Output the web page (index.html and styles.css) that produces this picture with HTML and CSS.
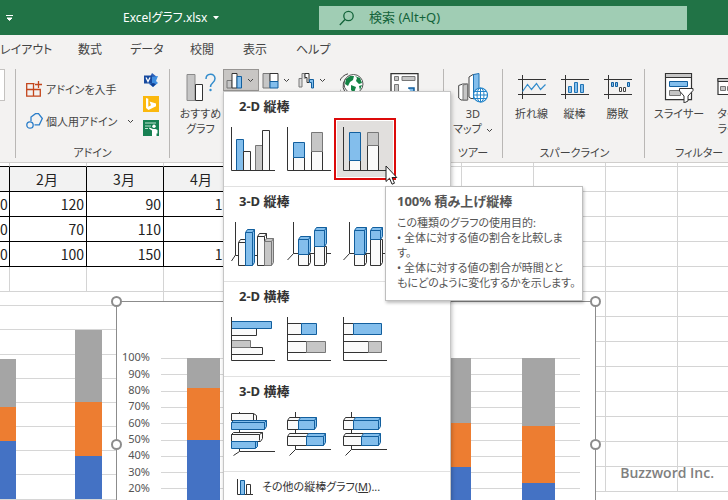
FILE: index.html
```html
<!DOCTYPE html>
<html lang="ja">
<head>
<meta charset="utf-8">
<title>Excelグラフ.xlsx</title>
<link rel="stylesheet" href="styles.css">
</head>
<body>
<header class="titlebar">
  <button class="qat" aria-label="クイック アクセス"><svg width="8" height="8" viewBox="0 0 8 8"><path d="M0 1.500h7M1 4l2.500 2.500L6 4z" fill="#fff" stroke="#fff"/></svg></button>
  <button class="doc">Excelグラフ.xlsx <svg width="6" height="4" viewBox="0 0 6 4"><path d="M0 0h6L3 3.500z" fill="#fff"/></svg></button>
  <label class="search">
    <svg width="16" height="16" viewBox="0 0 16 16" fill="none" stroke="#13633a" stroke-width="1.300"><circle cx="9.500" cy="6" r="4.700"/><path d="M6 9.500L.8 15"/></svg>
    <input type="text" placeholder="検索 (Alt+Q)" aria-label="検索">
  </label>
</header>

<nav class="tabs">
  <a href="#">レイアウト</a><a href="#">数式</a><a href="#">データ</a><a href="#">校閲</a><a href="#">表示</a><a href="#">ヘルプ</a>
</nav>

<section class="ribbon">
  <div class="group g-edge"><div class="gallery"></div></div>

  <div class="group g-addin">
    <div class="tools">
      <div class="rows">
        <button class="row"><svg width="17" height="16" viewBox="0 0 17 16" fill="none" stroke="#c4461c" stroke-width="1.300"><path d="M8.500 2.600H.7v12.600h13.600V8.500H.7M7.500 2.600v12.600M12.500 0v7M9 3.500h7"/></svg>アドインを入手</button>
        <button class="row"><svg width="17" height="16" viewBox="0 0 17 16" fill="none" stroke="#2a7dc9" stroke-width="1.300"><path d="M5 8V4l4.500-3.300h3L16.300 5.500l-3 6.300H8.500"/><circle cx="4" cy="12" r="3.200"/></svg>個人用アドイン<svg class="chev wide" width="7" height="5" viewBox="0 0 7 5"><path d="M1 1l2.500 2.500L6 1"/></svg></button>
      </div>
      <div class="apps">
        <button aria-label="Visio"><svg width="16" height="16" viewBox="0 0 16 16"><path d="M9 1l5 4-2 3-5-3z" fill="#2b5fb8"/><path d="M9 5l6-1-2 5 2 2-5 4-4-3z" fill="#3f8ee0"/><path d="M10 11l3 1-3 3-3-3z" fill="#123f91"/><rect x="1" y="3.500" width="8" height="8" fill="#174a9f"/><path d="M3 5.500l2 4 2-4" fill="none" stroke="#fff" stroke-width="1.300"/></svg></button>
        <button aria-label="Bing"><svg width="16" height="16" viewBox="0 0 16 16"><path d="M0 0h16v16H0z" fill="#fbb80d"/><path d="M3 2l2.300.8v8L8 9.300l-1.500-3.800 6.500 2v2.700L5.500 14 3 12z" fill="#fff"/></svg></button>
        <button aria-label="People Graph"><svg width="16" height="16" viewBox="0 0 16 16"><path d="M0 0h16v16H0z" fill="#178052"/><path d="M2 3h11M2 6h6M2 8.500h3" stroke="#bfe3d0" stroke-width="1"/><circle cx="11" cy="6.300" r="1.700" fill="#fff"/><path d="M6.500 7.500L10 9h2.500l2 1v3.500h-1V16H9v-5.500L6 8.500z" fill="#fff"/></svg></button>
      </div>
    </div>
    <div class="caption">アドイン</div>
  </div>

  <div class="group g-charts">
    <div class="tools">
      <button class="big b-rec"><svg width="30" height="30" viewBox="0 0 30 30"><path d="M1 1.500h8v26H1z" fill="#c6c6c6" stroke="#8a8a8a"/><path d="M9.500 11.500h7v16h-7z" fill="#fff" stroke="#333"/><path d="M20 6c0-6 9-6.500 9-.5 0 4.500-4.500 4-4.500 8.500" fill="none" stroke="#328ccc" stroke-width="1.500"/><circle cx="24.500" cy="17" r="1.200" fill="#328ccc"/></svg>おすすめ<br>グラフ</button>
      <div class="splits">
        <button class="split on" aria-label="縦棒グラフ"><svg width="17" height="17" viewBox="0 0 17 17"><path d="M1 8.500h5v7.500H1z" fill="#c6c6c6" stroke="#777"/><path d="M6 1.500h5V16H6z" fill="#fff" stroke="#333"/><path d="M11 4.500h4.500V16H11z" fill="#83beec" stroke="#125f9e"/></svg><svg class="chev" width="7" height="5" viewBox="0 0 7 5"><path d="M1 1l2.500 2.500L6 1"/></svg></button>
        <button class="split" aria-label="階層構造グラフ"><svg width="17" height="17" viewBox="0 0 17 17"><path d="M1 1.500h7V16H1z" fill="#c6c6c6" stroke="#777"/><path d="M8 1.500h8v8H8z" fill="#fff" stroke="#333"/><path d="M8 9.500h8V16H8z" fill="#83beec" stroke="#125f9e"/></svg><svg class="chev" width="7" height="5" viewBox="0 0 7 5"><path d="M1 1l2.500 2.500L6 1"/></svg></button>
        <button class="split" aria-label="ウォーターフォール図"><svg width="17" height="17" viewBox="0 0 17 17"><path d="M1 15V6.500h3V15zM4 6.500v-5h3V7" fill="#ddd" stroke="#777"/><path d="M7 1.500h4v9H9v-5H7z" fill="#fff" stroke="#333"/><path d="M11.500 10.500v-3h4V16h-2v-5.500z" fill="#83beec" stroke="#125f9e"/></svg><svg class="chev" width="7" height="5" viewBox="0 0 7 5"><path d="M1 1l2.500 2.500L6 1"/></svg></button>
      </div>
      <button class="big b-map" aria-label="マップ"><svg width="24" height="28" viewBox="0 0 24 28"><path d="M8 .8A12 12 0 0 0 1.500 20M9 3A11 11 0 0 0 5 19" fill="none" stroke="#444"/><circle cx="13.500" cy="11" r="9.500" fill="#fff" stroke="#555"/><path d="M6 6l4-3 4 0-1 4-3 2-2 4-3-2zM15 3l5 2 2 5-3 1-3-3 1-3zM11 12l5 2-2 6-3-3zM19 13l3-1-2 5z" fill="#148345"/></svg></button>
      <button class="big b-pivot" aria-label="ピボットグラフ"><svg width="30" height="28" viewBox="0 0 30 28"><path d="M1 .7h27V27H1z" fill="#fff" stroke="#333" stroke-width="1.300"/><path d="M4.500 3.500h4v4h-4zM12 3.500h13v4H12zM4.500 11.500h4v12h-4z" fill="#c6c6c6" stroke="#777"/><path d="M19 16v-1h5v9" fill="#83beec" stroke="#125f9e" stroke-width="1.500"/></svg></button>
    </div>
    <div class="caption">グラフ</div>
  </div>

  <div class="group g-tour">
    <div class="tools">
      <button class="big"><svg width="30" height="30" viewBox="0 0 30 30"><path d="M.7 12.500l4-1.500h5v16H3L.7 25z" fill="#fff" stroke="#444"/><path d="M5 12l4.500-1v16H5z" fill="#c6c6c6" stroke="#777"/><path d="M11 4l4-2.500h5.500v24H13L11 24z" fill="#fff" stroke="#444"/><path d="M15.500 1.500l5.500-1V24l-5.500 2z" fill="#83beec" stroke="#2174b5"/><circle cx="22.500" cy="22" r="7" fill="#fff" stroke="#2384c9" stroke-width="1.200"/><path d="M15.500 22h14M17 18.500h11M17 25.500h11M22.500 15v14" stroke="#2384c9" fill="none"/><ellipse cx="22.500" cy="22" rx="3.500" ry="7" fill="none" stroke="#2384c9"/></svg>3D<br>マップ<svg class="chev" width="7" height="5" viewBox="0 0 7 5"><path d="M1 1l2.500 2.500L6 1"/></svg></button>
    </div>
    <div class="caption">ツアー</div>
  </div>

  <div class="group g-spark">
    <div class="tools">
      <button class="big"><svg width="30" height="30" viewBox="0 0 30 30" fill="none"><path d="M1 6.500h28M1 21.500h28M5.500 2v24" stroke="#333"/><path d="M5.500 18.500l5-7 4 5 5-6 4 6 5-5" stroke="#328ccc" stroke-width="1.200"/></svg>折れ線</button>
      <button class="big"><svg width="30" height="30" viewBox="0 0 30 30"><path d="M1 6.500h28M1 21.500h28M5.500 2v24" stroke="#333"/><path d="M8.500 13.500h3v6h-3zM14.500 9.500h3v10h-3zM20.500 11.500h3v8h-3z" fill="#83beec" stroke="#2174b5"/></svg>縦棒</button>
      <button class="big"><svg width="30" height="30" viewBox="0 0 30 30"><path d="M1 6.500h28M1 21.500h28M5.500 2v24" stroke="#333"/><path d="M8.500 9.500h2v4h-2zM12.500 9.500h2v4h-2zM24.500 9.500h2v4h-2z" fill="#83beec" stroke="#125f9e"/><path d="M16.500 14.500h2v4h-2zM20.500 14.500h2v4h-2z" fill="#fff" stroke="#444"/></svg>勝敗</button>
    </div>
    <div class="caption">スパークライン</div>
  </div>

  <div class="group g-filter">
    <div class="tools">
      <button class="big b-slicer"><svg width="30" height="30" viewBox="0 0 30 30"><path d="M1.500.7h26v26h-26z" fill="#fff" stroke="#333" stroke-width="1.200"/><path d="M2 1h25v3.500H2z" fill="#c6c6c6"/><path d="M1.500 4.500h26" stroke="#333"/><path d="M5.500 8.500h18v5h-18z" fill="#83beec" stroke="#125f9e"/><path d="M5.500 17.500h11v5h-11z" fill="#c6c6c6" stroke="#777"/><path d="M15.500 15.500h13.500v2l-5 5.500v5l-4 2v-7l-4.500-5z" fill="#fff" stroke="#333"/></svg>スライサー</button>
      <button class="big b-time"><svg width="30" height="30" viewBox="0 0 30 30"><path d="M1 5.500h28v16H1z" fill="#fff" stroke="#333" stroke-width="1.200"/><path d="M1 5.500h28v3H1z" fill="#c6c6c6" stroke="#333"/><path d="M3.500 13.500h5v4h-5zM10.500 13.500h5v4h-5z" fill="#c6c6c6" stroke="#777"/><path d="M15 15.500h13l-5 6v6l-3 1v-7z" fill="#fff" stroke="#333"/></svg>タイム<br>ライン</button>
    </div>
    <div class="caption">フィルター</div>
  </div>
</section>

<main class="sheet">
  <table>
    <colgroup><col class="c0"><col class="cm"><col class="cm"><col class="cm"><col class="cm"><col class="cn"><col class="cn"><col class="cn"><col class="cn"><col class="cn"><col class="cn"></colgroup>
    <tbody>
    <tr class="stub"><td></td><td></td><td></td><td></td><td></td><td></td><td></td><td></td><td></td><td></td><td></td></tr>
    <tr class="head"><th></th><th>2月</th><th>3月</th><th>4月</th><td></td><td></td><td></td><td></td><td></td><td></td><td></td></tr>
    <tr><td class="n">0</td><td class="n">120</td><td class="n">90</td><td class="n">110</td><td></td><td></td><td></td><td></td><td></td><td></td><td></td></tr>
    <tr><td class="n">0</td><td class="n">70</td><td class="n">110</td><td class="n"></td><td></td><td></td><td></td><td></td><td></td><td></td><td></td></tr>
    <tr><td class="n">0</td><td class="n">100</td><td class="n">150</td><td class="n">110</td><td></td><td></td><td></td><td></td><td></td><td></td><td></td></tr>
    <tr><td></td><td></td><td></td><td></td><td></td><td></td><td></td><td></td><td></td><td></td><td></td></tr>
    <tr><td></td><td></td><td></td><td></td><td></td><td></td><td></td><td></td><td></td><td></td><td></td></tr>
    <tr><td></td><td></td><td></td><td></td><td></td><td></td><td></td><td></td><td></td><td></td><td></td></tr>
    <tr><td></td><td></td><td></td><td></td><td></td><td></td><td></td><td></td><td></td><td></td><td></td></tr>
    <tr><td></td><td></td><td></td><td></td><td></td><td></td><td></td><td></td><td></td><td></td><td></td></tr>
    <tr><td></td><td></td><td></td><td></td><td></td><td></td><td></td><td></td><td></td><td></td><td></td></tr>
    <tr><td></td><td></td><td></td><td></td><td></td><td></td><td></td><td></td><td></td><td></td><td></td></tr>
    <tr><td></td><td></td><td></td><td></td><td></td><td></td><td></td><td></td><td></td><td></td><td></td></tr>
    <tr><td></td><td></td><td></td><td></td><td></td><td></td><td></td><td></td><td></td><td></td><td></td></tr>
    </tbody>
  </table>

  <svg class="chart chart-a" width="116" height="208" viewBox="0 0 116 208" shape-rendering="crispEdges">
    <path d="M0 0h116v208H0z" fill="#fff"/>
    <path d="M0 13.500h116M0 37.500h116M0 62.500h116M0 86.500h116M0 110.500h116M0 134.500h116M0 158.500h116M0 182.500h116M0 207.500h116" stroke="#d6d6d6"/>
    <path d="M0 67h16v48H0zM75 38h27v72H75z" fill="#a5a5a5"/>
    <path d="M0 115h16v34H0zM75 110h27v54H75z" fill="#ed7d31"/>
    <path d="M0 149h16v58H0zM75 164h27v43H75z" fill="#4472c4"/>
  </svg>

  <svg class="chart chart-b" width="492" height="240" viewBox="0 0 492 240">
    <path d="M6.500 6.500h479V260H6.500z" fill="#fff" stroke="#8c8c8c"/>
    <path d="M51 63.500h419M51 79.500h419M51 96.500h419M51 112.500h419M51 128.500h419M51 145.500h419M51 161.500h419M51 177.500h419M51 193.500h419" stroke="#d6d6d6"/>
    <g shape-rendering="crispEdges">
      <path d="M77 63h33v30H77zM328 63h33v65h-33zM412 63h33v68h-33z" fill="#a5a5a5"/>
      <path d="M77 93h33v52H77zM328 128h33v44h-33zM412 131h33v57h-33z" fill="#ed7d31"/>
      <path d="M77 145h33v95H77zM328 172h33v68h-33zM412 188h33v52h-33z" fill="#4472c4"/>
    </g>
    <g class="axis">
      <text x="40" y="66">100%</text><text x="40" y="83">90%</text><text x="40" y="99">80%</text><text x="40" y="115">70%</text><text x="40" y="132">60%</text><text x="40" y="148">50%</text><text x="40" y="164">40%</text><text x="40" y="181">30%</text><text x="40" y="197">20%</text>
    </g>
    <g fill="#fff" stroke="#8c8c8c" stroke-width="2"><circle cx="6.500" cy="6.500" r="4.500"/><circle cx="485.500" cy="6.500" r="4.500"/><circle cx="6.500" cy="149.500" r="4.500"/><circle cx="485.500" cy="149.500" r="4.500"/></g>
  </svg>
  <div class="mark">Buzzword Inc.</div>
</main>

<div class="menu">
  <section>
    <h2>2-D 縦棒</h2>
    <div class="items">
      <button aria-label="集合縦棒"><svg class="ic" viewBox="0 0 44 44"><path class="b" d="M5.500 12.500h7v31h-7z"/><path class="w" d="M12.500 24.500h7v19h-7z"/><path class="g" d="M24.500 18.500h7v25h-7z"/><path class="w" d="M31.500 3.500h7v40h-7z"/><path class="ax" d="M.5 0v43.500H44"/></svg></button>
      <button aria-label="積み上げ縦棒"><svg class="ic" viewBox="0 0 44 44"><path class="w" d="M6.500 30.500h11v13h-11zM24.500 24.500h11v19h-11z"/><path class="b" d="M6.500 15.500h11v15h-11z"/><path class="g" d="M24.500 5.500h11v19h-11z"/><path class="ax" d="M.5 0v43.500H44"/></svg></button>
      <button class="picked" aria-label="100% 積み上げ縦棒"><svg class="ic" viewBox="0 0 44 44"><path class="w" d="M6.500 33.500h11v10h-11zM24.500 18.500h11v25h-11z"/><path class="b" d="M6.500 5.500h11v28h-11z"/><path class="g" d="M24.500 5.500h11v13h-11z"/><path class="ax" d="M.5 0v43.500H44"/></svg></button>
    </div>
  </section>
  <section>
    <h2>3-D 縦棒</h2>
    <div class="items">
      <button aria-label="3-D 集合縦棒"><svg class="ic" viewBox="0 0 44 44"><path class="ax" d="M4.500 0v33L.5 39M4.500 33.500h38"/><path class="w" d="M7.500 20.500l2-3h7v26h-9zM7.500 20.500h7v23"/><path class="b" d="M14.500 10.500l2-3h7v33l-2 3h-7zM14.500 10.500h7v33M21.500 10.500l2-3"/><path class="w" d="M26.500 14.500l2-3h7v32h-9zM26.500 14.500h7v29M33.500 14.500l2-3"/><path class="g" d="M33.500 19.500l2-3h7v24l-2 3h-7zM33.500 19.500h7v24M40.500 19.500l2-3"/></svg></button>
      <button aria-label="3-D 積み上げ縦棒"><svg class="ic" viewBox="0 0 44 44"><path class="ax" d="M6.500 0v31.500L.5 38M6.500 31.500H44"/><path class="w" d="M11.500 32.500h12v8l-2 3h-10zM21.500 32.500v11M27.500 24.500h12v16l-2 3h-10zM37.500 24.500v19"/><path class="b" d="M11.500 17.500l2-3h10v15l-2 3h-10zM11.500 17.500h10v15M21.500 17.500l2-3M27.500 8.500l2-3h10v16l-2 3h-10zM27.500 8.500h10v16M37.500 8.500l2-3"/></svg></button>
      <button aria-label="3-D 100% 積み上げ縦棒"><svg class="ic" viewBox="0 0 44 44"><path class="ax" d="M6.500 0v31.500L.5 38M6.500 31.500H44"/><path class="w" d="M11.500 32.500h12v8l-2 3h-10zM21.500 32.500v11M27.500 17.500h12v23l-2 3h-10zM37.500 17.500v26"/><path class="b" d="M11.500 8.500l2-3h10v24l-2 3h-10zM11.500 8.500h10v24M21.500 8.500l2-3M27.500 8.500l2-3h10v9l-2 3h-10zM27.500 8.500h10v9M37.500 8.500l2-3"/></svg></button>
    </div>
  </section>
  <section>
    <h2>2-D 横棒</h2>
    <div class="items">
      <button aria-label="集合横棒"><svg class="ic" viewBox="0 0 44 44"><path class="w" d="M.5 11.500h25v7H.5zM.5 30.500h31v7H.5z"/><path class="b" d="M.5 4.500h40v7H.5z"/><path class="g" d="M.5 23.500h19v7H.5z"/><path class="ax" d="M.5 0v43.500H44"/></svg></button>
      <button aria-label="積み上げ横棒"><svg class="ic" viewBox="0 0 44 44"><path class="w" d="M.5 6.500h14v11H.5zM.5 24.500h19v11H.5z"/><path class="b" d="M14.500 6.500h15v11h-15z"/><path class="g" d="M19.500 24.500h19v11h-19z"/><path class="ax" d="M.5 0v43.500H44"/></svg></button>
      <button aria-label="100% 積み上げ横棒"><svg class="ic" viewBox="0 0 44 44"><path class="w" d="M.5 6.500h10v11H.5zM.5 24.500h25v11H.5z"/><path class="b" d="M10.500 6.500h28v11h-28z"/><path class="g" d="M25.500 24.500h13v11h-13z"/><path class="ax" d="M.5 0v43.500H44"/></svg></button>
    </div>
  </section>
  <section>
    <h2>3-D 横棒</h2>
    <div class="items">
      <button aria-label="3-D 集合横棒"><svg class="ic" viewBox="0 0 44 44"><path class="ax" d="M8.500 0v39.500H44M8.500 39.500l-6 4"/><path class="w" d="M.5 1.500h22l3 2v5H.5zM22.500 1.500v7M.5 22.500l2-2h29v6l-2 3H.5zM.5 22.500h28v6M28.500 22.500l3-2"/><path class="b" d="M.5 10.500l2-2h33v6l-2 3H.5zM.5 10.500h33v7M33.500 10.500l2-2M.5 29.500h26v5l-2 2H.5zM24.500 30v6"/></svg></button>
      <button aria-label="3-D 積み上げ横棒"><svg class="ic" viewBox="0 0 44 44"><path class="ax" d="M8.500 0v37.500H44M8.500 37.500l-6 6"/><path class="w" d="M.5 8.500l2-3h11v12H.5zM.5 8.500h11M.5 24.500l2-3h19v12H.5zM.5 24.500h19"/><path class="b" d="M11.500 8.500l2-3h16v9l-2 3h-16zM11.500 8.500h16v9M27.500 8.500l2-3M19.500 24.500l2-3h17v9l-2 3h-17zM19.500 24.500h17v9M36.500 24.500l2-3"/></svg></button>
      <button aria-label="3-D 100% 積み上げ横棒"><svg class="ic" viewBox="0 0 44 44"><path class="ax" d="M8.500 0v37.500H44M8.500 37.500l-6 6"/><path class="w" d="M.5 8.500l2-3h10v12H.5zM.5 8.500h10M.5 24.500l2-3h18v12H.5zM.5 24.500h18"/><path class="b" d="M10.500 8.500l2-3h25v9l-2 3h-25zM10.500 8.500h25v9M35.500 8.500l2-3M18.500 24.500l2-3h17v9l-2 3h-17zM18.500 24.500h17v9M35.500 24.500l2-3"/></svg></button>
    </div>
  </section>
  <button class="more"><svg width="16" height="16" viewBox="0 0 16 16"><path d="M.5 0v15.500H16" fill="none" stroke="#333"/><path d="M3.500 1.500h4v14h-4z" fill="#83beec" stroke="#125f9e"/><path d="M9.500 5.500h4v10h-4z" fill="#fff" stroke="#333"/></svg><span>その他の縦棒グラフ(<u>M</u>)...</span></button>
</div>

<aside class="tip">
  <h3>100% 積み上げ縦棒</h3>
  <p>この種類のグラフの使用目的:<br>• 全体に対する値の割合を比較しま<br>す。<br>• 全体に対する値の割合が時間とと<br>もにどのように変化するかを示します。</p>
</aside>
<svg class="cursor" width="13" height="21" viewBox="0 0 13 21"><path d="M1 1v15.500l3.500-3.300 2.500 6 2.500-1-2.500-5.700h4.800z" fill="#fff" stroke="#222"/></svg>
</body>
</html>
```
FILE: styles.css
```css
* { box-sizing: border-box; }
body {
  margin: 0;
  height: 100vh;
  overflow: hidden;
  position: relative;
  display: flex;
  flex-direction: column;
  background: #fff;
  color: #444;
  font: 12px/15px "Noto Sans", "Noto Sans CJK JP", sans-serif;
  font-feature-settings: "palt";
}
button {
  font: inherit;
  color: inherit;
  font-feature-settings: inherit;
  background: none;
  border: 0;
  padding: 0;
  margin: 0;
}
svg { flex: none; }

/* title bar */
.titlebar {
  display: flex;
  align-items: center;
  height: 35px;
  flex: none;
  background: #217346;
  color: #fff;
}
.qat { width: 20px; line-height: 8px; }
.doc { margin-left: 103px; width: 196px; text-align: left; white-space: nowrap; }
.doc svg { margin: 0 0 2px 2px; }
.search {
  display: flex;
  align-items: center;
  gap: 14px;
  flex: 1;
  height: 24px;
  margin-right: 41px;
  padding-left: 20px;
  background: #a0cdb4;
}
.search input {
  flex: 1;
  border: 0;
  padding: 0;
  background: none;
  font: inherit;
  font-size: 13px;
}
.search input::placeholder { color: #13633a; opacity: 1; }

/* tabs */
.tabs {
  display: grid;
  grid-template-columns: 78px 52px 60px 53px 53px 1fr;
  height: 29px;
  flex: none;
  line-height: 30px;
  font-size: 12px;
  background: #f3f2f1;
}
.tabs a { color: #444; text-decoration: none; white-space: nowrap; }

/* ribbon */
.ribbon {
  display: flex;
  height: 99px;
  flex: none;
  padding: 5px 0 4px;
  overflow: hidden;
  font-size: 11px;
  background: #f3f2f1;
  border-bottom: 1px solid #d0cecc;
}
.group {
  display: flex;
  flex-direction: column;
  flex: none;
  border-right: 1px solid #b9b7b5;
}
.tools { display: flex; flex: 1; align-items: flex-start; }
.caption { text-align: center; line-height: 11px; white-space: nowrap; }
.g-edge { width: 16px; }
.gallery { width: 5px; height: 32px; background: #fff; border: 1px solid #c4c2c0; border-left: 0; }
.g-addin { width: 154px; padding-left: 10px; }
.g-addin .caption { padding-right: 10px; }
.g-charts { width: 274px; padding-left: 8px; }
.g-tour { width: 59px; }
.g-spark { width: 142px; padding: 0 5px 0 7px; }
.g-filter { flex: 1 0 84px; border: 0; padding-left: 8px; }
.g-filter .caption { text-align: left; padding-left: 22px; }

.rows { display: flex; flex-direction: column; width: 117px; padding-top: 4px; }
.row { display: flex; align-items: center; gap: 3px; height: 32px; white-space: nowrap; }
.apps { display: flex; flex-direction: column; gap: 8px; padding-top: 3px; }
.apps button { height: 16px; line-height: 0; }

.big {
  flex: 1;
  padding-top: 4px;
  white-space: nowrap;
  text-align: center;
}
.big > svg:first-child { display: block; margin: 0 auto 3px; }
.b-rec { flex: none; width: 45px; }
.b-map { flex: none; width: 42px; }
.b-pivot { flex: none; width: 64px; }
.b-slicer { flex: none; width: 52px; }
.b-time { flex: none; width: 54px; }
.chev { fill: none; stroke: #444; stroke-width: 1; margin-left: 4px; vertical-align: middle; }
.chev.wide { margin-left: auto; }
.rows .row:last-child { padding-right: 9px; }
.splits { display: flex; }
.split { display: flex; align-items: center; width: 36px; height: 22px; padding-left: 2px; border: 1px solid transparent; }
.split.on { background: #c8c6c4; border-color: #979593; }

/* sheet */
.sheet { position: relative; flex: 1; overflow: hidden; }
table {
  table-layout: fixed;
  width: 750px;
  border-spacing: 0;
  font: 14px/20px "Noto Sans CJK JP", sans-serif;
  color: #222;
}
.c0 { width: 10px; }
.cm { width: 77px; }
.cn { width: 72px; }
td, th {
  height: 25px;
  padding: 0 2px 0 0;
  font-weight: 400;
  border: solid #d4d4d4;
  border-width: 0 1px 1px 0;
}
th { background: #f2f2f2; text-align: center; }
.n { text-align: right; }
th, .n { border-color: #000; }
.stub td { height: 4px; line-height: 0; }
.stub td:nth-child(-n+4) { border-bottom-color: #000; }

.chart { position: absolute; }
.chart-a { left: 0; top: 129px; }
.chart-b { left: 110px; top: 132px; }
.axis { font: 11px "Noto Sans", sans-serif; fill: #555; text-anchor: end; }
.mark {
  position: absolute;
  right: 14px;
  bottom: 17px;
  font: 600 14px/20px "Open Sans", sans-serif;
  color: #808080;
  text-shadow: 0 0 3px #fff, 0 0 3px #fff;
}

/* chart menu */
.menu {
  position: absolute;
  left: 223px;
  top: 91px;
  width: 228px;
  background: #fff;
  border: 1px solid #c6c6c6;
  box-shadow: 1px 2px 4px rgba(0, 0, 0, .25);
}
.menu section { padding: 0 1px 9px; border-bottom: 1px solid #e1e1e1; }
.menu h2 { margin: 0; padding-left: 14px; font-size: 13px; line-height: 29px; font-weight: 700; color: #333; }
.items { display: flex; }
.items button { width: 56px; height: 56px; line-height: 0; }
.items .picked { background: #e1dfdd; outline: 2px solid #dc0a0a; outline-offset: 1px; }
.ic { width: 44px; height: 44px; overflow: visible; stroke-width: 1; }
.ic .ax { fill: none; stroke: #333; }
.ic .w { fill: #fafafa; stroke: #333; }
.ic .b { fill: #83beec; stroke: #125f9e; }
.ic .g { fill: #c6c6c6; stroke: #777; }
.more { display: flex; align-items: center; gap: 9px; width: 100%; height: 29px; padding-left: 13px; font-size: 11px; color: #333; white-space: nowrap; }

/* tooltip */
.tip {
  position: absolute;
  left: 385px;
  top: 186px;
  width: 198px;
  padding: 6px 11px 10px;
  background: #fff;
  border: 1px solid #bebebe;
  box-shadow: 1px 2px 3px rgba(0, 0, 0, .25);
  color: #555;
  white-space: nowrap;
}
.tip h3 { margin: 0 0 6px; font-size: 13px; line-height: 16px; font-weight: 700; }
.tip p { margin: 0; font-size: 11px; }
.cursor { position: absolute; left: 385px; top: 165px; }
```
